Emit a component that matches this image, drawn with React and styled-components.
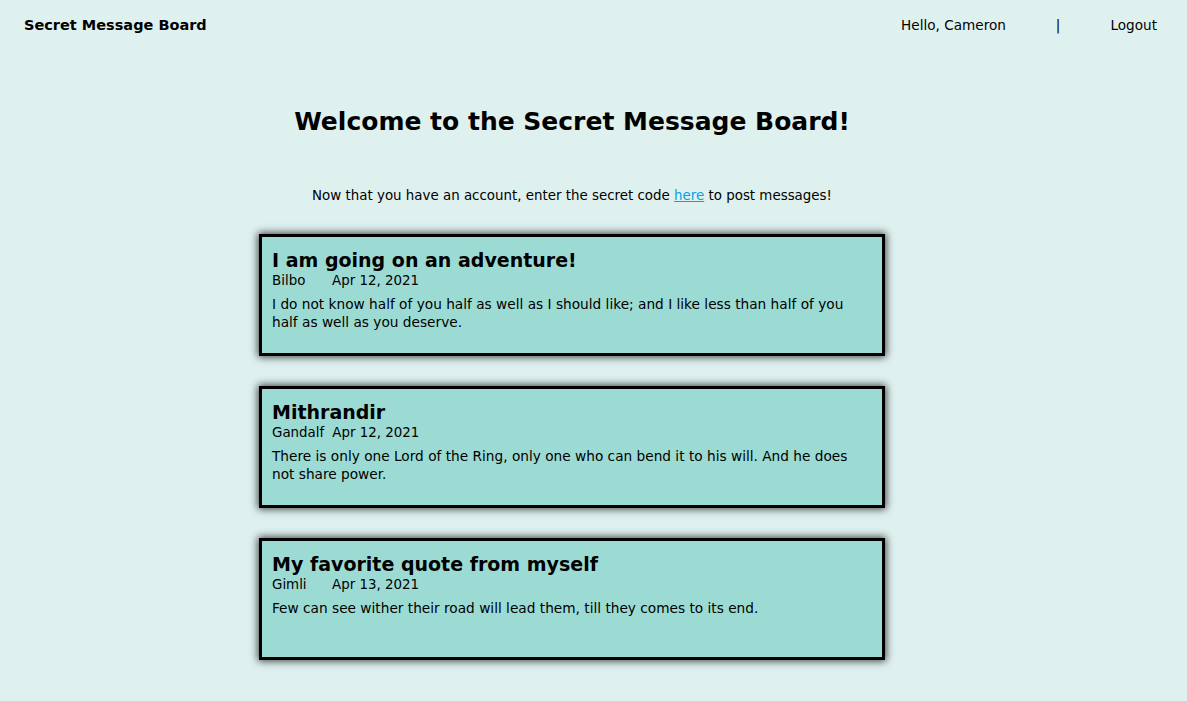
import React from 'react'
import styled, { createGlobalStyle } from 'styled-components'

const GlobalStyle = createGlobalStyle`
    body {
        margin: 0;
        background: #dff1ef;
        font-family: "DejaVu Sans", "Liberation Sans", sans-serif;
        color: #000;
    }
`;

const Nav = styled.nav`
    height: 50px;
    display: flex;
    justify-content: space-between;
    align-items: center;
    padding: 0 30px 0 24px;
`;

const Brand = styled.div`
    font-weight: bold;
    font-size: 14.5px;
`;

const NavLinks = styled.div`
    display: flex;
    align-items: center;
    gap: 50px;
    font-size: 13.6px;
    color: #000;
`;

const Main = styled.main`
    display: flex;
    flex-direction: column;
    align-items: center;
    padding-right: 43px;
`;

const Title = styled.h1`
    font-size: 25px;
    font-weight: bold;
    margin: 57px 0 0;
`;

const Intro = styled.p`
    font-size: 13.4px;
    margin: 52px 0 31px;

    a {
        color: #0aa0e8;
    }
`;

const Card = styled.div`
    width: 596px;
    height: 94px;
    border: 3px solid #000;
    background: #9cdbd3;
    box-shadow: 0 0 8px 1px rgba(0, 0, 0, 0.75);
    padding: 12px 14px 10px 10px;
    margin-bottom: 30px;
`;

const CardTitle = styled.h2`
    font-size: 19px;
    font-weight: bold;
    margin: 0;
    line-height: 23px;
`;

const Meta = styled.div`
    display: flex;
    font-size: 13.4px;
    line-height: 18px;
`;

const Author = styled.span`
    box-sizing: border-box;
    min-width: 60px;
    padding-right: 8px;
`;

const Body = styled.p`
    font-size: 13.7px;
    line-height: 18px;
    margin: 5px 0 0;
`;

const messages = [
    {
        title: 'I am going on an adventure!',
        author: 'Bilbo',
        date: 'Apr 12, 2021',
        body: 'I do not know half of you half as well as I should like; and I like less than half of you half as well as you deserve.',
    },
    {
        title: 'Mithrandir',
        author: 'Gandalf',
        date: 'Apr 12, 2021',
        body: 'There is only one Lord of the Ring, only one who can bend it to his will. And he does not share power.',
    },
    {
        title: 'My favorite quote from myself',
        author: 'Gimli',
        date: 'Apr 13, 2021',
        body: 'Few can see wither their road will lead them, till they comes to its end.',
    },
]

function App() {
    return (
        <div>
            <GlobalStyle />
            <Nav>
                <Brand>Secret Message Board</Brand>
                <NavLinks>
                    <span>Hello, Cameron</span>
                    <span>|</span>
                    <span>Logout</span>
                </NavLinks>
            </Nav>
            <Main>
                <Title>Welcome to the Secret Message Board!</Title>
                <Intro>
                    Now that you have an account, enter the secret code <a href="#">here</a> to post messages!
                </Intro>
                {messages.map((m) => (
                    <Card key={m.title}>
                        <CardTitle>{m.title}</CardTitle>
                        <Meta>
                            <Author>{m.author}</Author>
                            <span>{m.date}</span>
                        </Meta>
                        <Body>{m.body}</Body>
                    </Card>
                ))}
            </Main>
        </div>
    )
}

export default App
